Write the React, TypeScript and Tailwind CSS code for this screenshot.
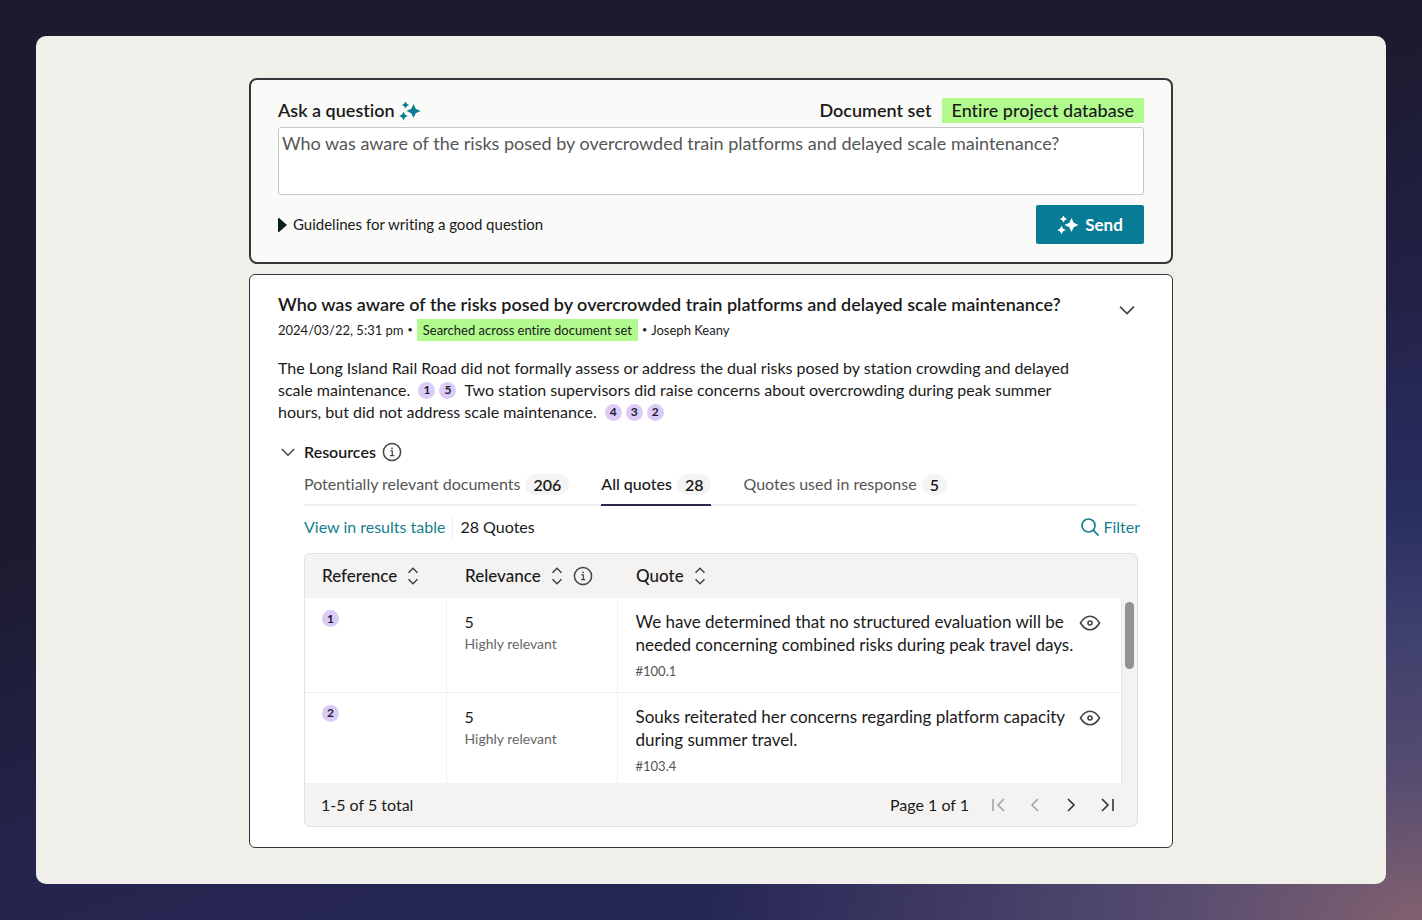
import React, { useState } from 'react';

interface Quote {
  id: number;
  relevance: number;
  label: string;
  text: string;
  ref: string;
}

const quotes: Quote[] = [
  {
    id: 1,
    relevance: 5,
    label: 'Highly relevant',
    text: 'We have determined that no structured evaluation will be needed concerning combined risks during peak travel days.',
    ref: '#100.1',
  },
  {
    id: 2,
    relevance: 5,
    label: 'Highly relevant',
    text: 'Souks reiterated her concerns regarding platform capacity during summer travel.',
    ref: '#103.4',
  },
];

const tabs = [
  { label: 'Potentially relevant documents', count: 206 },
  { label: 'All quotes', count: 28 },
  { label: 'Quotes used in response', count: 5 },
];

const question =
  'Who was aware of the risks posed by overcrowded train platforms and delayed scale maintenance?';

function Sparkles({ className }: { className?: string }) {
  return (
    <svg viewBox="0 0 22 20" className={className} fill="currentColor" aria-hidden="true">
      <path d="M14.5 3L16.7 7.8L21.5 10L16.7 12.2L14.5 17L12.3 12.2L7.5 10L12.3 7.8Z" />
      <path d="M6.5 .5L7.8 2.7L10 4L7.8 5.3L6.5 7.5L5.2 5.3L3 4L5.2 2.7Z" />
      <path d="M4.5 10.8L5.9 13.6L8.7 15L5.9 16.4L4.5 19.2L3.1 16.4L.3 15L3.1 13.6Z" />
    </svg>
  );
}

function InfoIcon() {
  return (
    <svg viewBox="0 0 20 20" className="h-5 w-5 text-[#444]" fill="none" stroke="currentColor" aria-hidden="true">
      <circle cx="10" cy="10" r="8.6" strokeWidth="1.5" />
      <path d="M8.4 8.9H10.3V13.5M8 13.7H12.3" strokeWidth="1.2" />
      <circle cx="10" cy="6.3" r=".9" fill="currentColor" stroke="none" />
    </svg>
  );
}

function Chevron({ className }: { className?: string }) {
  return (
    <svg viewBox="0 0 16 16" className={className} fill="none" stroke="currentColor" strokeWidth="1.5" aria-hidden="true">
      <path d="M1.8 5L8 11.2L14.2 5" />
    </svg>
  );
}

function SortIcon() {
  return (
    <svg viewBox="0 0 12 18" className="h-[18px] w-3 text-[#444]" fill="none" stroke="currentColor" strokeWidth="1.5" aria-hidden="true">
      <path d="M1.5 5.8L6 1.3L10.5 5.8M1.5 12.2L6 16.7L10.5 12.2" />
    </svg>
  );
}

function EyeIcon() {
  return (
    <svg viewBox="0 0 22 16" className="h-4 w-[22px] text-[#444]" fill="none" stroke="currentColor" strokeWidth="1.6" aria-hidden="true">
      <path d="M1.5 8Q5.5 1.3 11 1.3T20.5 8Q16.5 14.7 11 14.7T1.5 8Z" />
      <circle cx="11" cy="8" r="2" />
    </svg>
  );
}

function Cite({ n }: { n: number }) {
  return (
    <button className="inline-flex h-[17px] w-[17px] items-center justify-center rounded-full bg-[#dccbf7] align-middle text-xs leading-none font-bold text-[#1c1a33]">
      {n}
    </button>
  );
}

function Cites({ items }: { items: number[] }) {
  return (
    <span className="mr-2 ml-1 inline-flex h-[22px] items-center gap-1 align-top">
      {items.map((n) => (
        <Cite key={n} n={n} />
      ))}
    </span>
  );
}

function PageButton({ label, d, disabled }: { label: string; d: string; disabled?: boolean }) {
  return (
    <button aria-label={label} disabled={disabled} className="text-[#333] disabled:text-[#a3a3a3]">
      <svg viewBox="0 0 16 16" className="h-4 w-4" fill="none" stroke="currentColor" strokeWidth="1.6" aria-hidden="true">
        <path d={d} />
      </svg>
    </button>
  );
}

function AskPanel() {
  const [value, setValue] = useState(question);

  return (
    <section className="rounded-lg border-2 border-[#35383a] bg-[#fafaf8] px-[27px] py-[18px]">
      <div className="flex h-[25px] items-center justify-between text-[18px]">
        <label htmlFor="question" className="flex items-center gap-1 font-semibold">
          Ask a question
          <Sparkles className="h-5 w-[22px] text-[#087c92]" />
        </label>
        <div className="flex items-center gap-[10px]">
          <span className="font-semibold">Document set</span>
          <button className="bg-[#b0fa8e] px-[10px] leading-[25px] font-medium">Entire project database</button>
        </div>
      </div>
      <textarea
        id="question"
        value={value}
        onChange={(e) => setValue(e.target.value)}
        className="mt-1 block h-[68px] w-full resize-none rounded-[3px] border border-[#c6c6c6] bg-white px-[3px] py-[3px] text-[18px] leading-6 text-[#555] outline-none"
      />
      <div className="mt-[10px] flex items-center justify-between">
        <button className="flex items-center gap-[6px] text-[15px]">
          <svg viewBox="0 0 9 14" className="h-[14px] w-[9px]" aria-hidden="true">
            <path d="M0 0H1L9 7L1 14H0Z" fill="#0b211f" />
          </svg>
          Guidelines for writing a good question
        </button>
        <button className="flex h-[39px] w-[108px] items-center justify-center gap-[6px] rounded-[2px] bg-[#087c94] text-[17px] font-bold text-white">
          <Sparkles className="h-5 w-[22px]" />
          Send
        </button>
      </div>
    </section>
  );
}

function QuoteTable() {
  return (
    <div className="mr-[6px] overflow-hidden rounded-md border border-[#e2e2e2] bg-[#f4f3f2]">
      <table className="w-full table-fixed border-collapse text-left">
        <colgroup>
          <col className="w-[141px]" />
          <col className="w-[171px]" />
          <col />
          <col className="w-[44px]" />
          <col className="w-[16px]" />
        </colgroup>
        <thead>
          <tr className="h-11 text-[17px]">
            <th className="pl-[17px] font-medium">
              <button className="flex items-center gap-[10px]">
                Reference <SortIcon />
              </button>
            </th>
            <th className="pl-[19px] font-medium">
              <span className="flex items-center gap-[10px]">
                <button className="flex items-center gap-[10px]">
                  Relevance <SortIcon />
                </button>
                <InfoIcon />
              </span>
            </th>
            <th className="pl-[19px] font-medium" colSpan={3}>
              <button className="flex items-center gap-[10px]">
                Quote <SortIcon />
              </button>
            </th>
          </tr>
        </thead>
        <tbody className="bg-white">
          {quotes.map((q, index) => (
            <tr key={q.id} className={`align-top ${index === 0 ? 'h-[94px] border-b border-[#f0f0f0]' : 'h-[91px]'}`}>
              <td className="pt-[11px] pl-[17px] leading-none">
                <Cite n={q.id} />
              </td>
              <td className="border-l border-[#f0f0f0] pt-3 pl-[18px]">
                <div className="text-base leading-[23px]">{q.relevance}</div>
                <div className="text-sm leading-[22px] text-[#666]">{q.label}</div>
              </td>
              <td className="border-l border-[#f0f0f0] pt-3 pl-[18px]">
                <p className="text-[17px] leading-[23px]">{q.text}</p>
                <div className="mt-[3px] text-[13px] leading-6 text-[#555]">{q.ref}</div>
              </td>
              <td className="pt-[17px] pl-[2px]">
                <button aria-label={`Preview quote ${q.id}`} className="block">
                  <EyeIcon />
                </button>
              </td>
              {index === 0 && (
                <td rowSpan={2} className="border-l border-[#e6e6e6] bg-[#f3f3f3] pt-1 pl-[3px]">
                  <div className="h-[67px] w-[9px] rounded-full bg-[#919191]" />
                </td>
              )}
            </tr>
          ))}
        </tbody>
      </table>
      <div className="flex h-[43px] items-center justify-between pr-[22px] pl-4 text-base">
        <span>1-5 of 5 total</span>
        <div className="flex items-center gap-5">
          <span className="mr-[2px]">Page 1 of 1</span>
          <PageButton label="First page" disabled d="M2 2V14M13 2L7 8L13 14" />
          <PageButton label="Previous page" disabled d="M11 2L5 8L11 14" />
          <PageButton label="Next page" d="M5 2L11 8L5 14" />
          <PageButton label="Last page" d="M3 2L9 8L3 14M14 2V14" />
        </div>
      </div>
    </div>
  );
}

function Resources() {
  const [activeTab, setActiveTab] = useState(1);

  return (
    <div className="mt-[17px]">
      <div className="flex items-center gap-[6px] pl-[2px]">
        <button className="flex items-center gap-2 text-base font-semibold">
          <Chevron className="h-4 w-4 text-[#444]" />
          Resources
        </button>
        <InfoIcon />
      </div>
      <div className="pl-[26px]">
        <div className="mr-[7px] flex gap-8 border-b-2 border-[#efefef]">
          {tabs.map((tab, index) => (
            <button
              key={tab.label}
              onClick={() => setActiveTab(index)}
              className={`-mb-[2px] flex h-[42px] items-center gap-[5px] border-b-2 text-base ${
                activeTab === index ? 'border-[#272a4c] font-medium' : 'border-transparent text-[#555]'
              }`}
            >
              {tab.label}
              <span className="rounded-full bg-[#f4f4f4] px-2 leading-[21px] font-semibold text-[#1a1a1a]">{tab.count}</span>
            </button>
          ))}
        </div>
        <div className="mr-1 flex h-[47px] items-center pb-[6px] text-base">
          <a href="#results" className="text-[#15808f]">
            View in results table
          </a>
          <span className="ml-[7px] border-l border-[#f0f0f0] pl-[7px]">28 Quotes</span>
          <button className="ml-auto flex items-center gap-1 text-[#15808f]">
            <svg viewBox="0 0 18 18" className="h-[18px] w-[18px]" fill="none" stroke="currentColor" strokeWidth="1.7" aria-hidden="true">
              <circle cx="7.5" cy="7.5" r="6.5" />
              <path d="M12.2 12.2L17.5 17.5" />
            </svg>
            Filter
          </button>
        </div>
        <QuoteTable />
      </div>
    </div>
  );
}

function AnswerPanel() {
  return (
    <section className="rounded-md border border-[#35383a] bg-white px-7 pt-[17px] pb-5">
      <div className="flex items-start justify-between">
        <h2 className="text-[18px] leading-6 font-semibold">{question}</h2>
        <button aria-label="Collapse answer" className="mt-[9px] mr-2 -mb-2 text-[#444]">
          <Chevron className="h-[18px] w-[18px]" />
        </button>
      </div>
      <div className="mt-[3px] flex items-center gap-1 text-[13px] leading-[22px]">
        <span>2024/03/22, 5:31 pm</span>
        <span className="text-[9px]">•</span>
        <span className="bg-[#b0fa8e] px-[6px]">Searched across entire document set</span>
        <span className="text-[9px]">•</span>
        <span>Joseph Keany</span>
      </div>
      <p className="mt-4 max-w-[800px] text-base leading-[22px]">
        The Long Island Rail Road did not formally assess or address the dual risks posed by station crowding and
        delayed scale maintenance. <Cites items={[1, 5]} />
        Two station supervisors did raise concerns about overcrowding during peak summer hours, but did not address
        scale maintenance. <Cites items={[4, 3, 2]} />
      </p>
      <Resources />
    </section>
  );
}

export default function App() {
  return (
    <div className="min-h-screen bg-[radial-gradient(50%_45%_at_100%_100%,#82616f_0%,rgba(92,80,114,0.9)_34%,rgba(50,50,100,0)_100%),radial-gradient(30%_35%_at_100%_70%,rgba(42,56,112,0.8)_0%,rgba(42,56,112,0)_100%),linear-gradient(160deg,#1c1a2e_38%,#25244e_62%,#27295c_100%)] p-9 font-['Lato',sans-serif] text-[#1a1a1a] [font-variant-ligatures:none]">
      <main className="min-h-[848px] rounded-[10px] bg-[#f0efea] pt-[42px] pb-9">
        <div className="mx-auto flex max-w-[924px] flex-col gap-[10px]">
          <AskPanel />
          <AnswerPanel />
        </div>
      </main>
    </div>
  );
}
